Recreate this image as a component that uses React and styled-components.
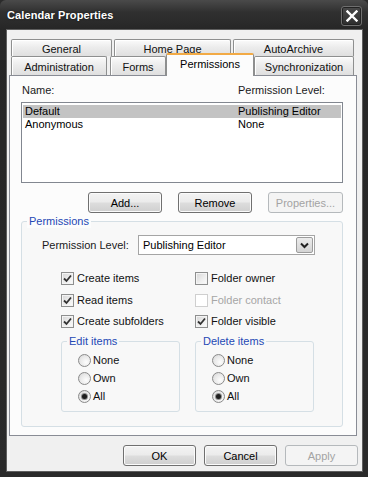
import React from "react";
import styled, { createGlobalStyle } from "styled-components";

const Global = createGlobalStyle`
  html, body { margin: 0; padding: 0; background: #2b2b2b; }
  body { font-family: "Liberation Sans", Arial, sans-serif; font-size: 11px; color: #000; }
  * { box-sizing: border-box; }
`;

const Window = styled.div`
  width: 368px;
  height: 477px;
  display: flex;
  flex-direction: column;
  padding: 0 6px 6px 7px;
  background: linear-gradient(#4a4a4a 0px, #303030 12px, #262626 30px, #2a2a2a 100%);
  border-radius: 6px 6px 0 0;
`;

const TitleBar = styled.div`
  height: 30px;
  flex: none;
  display: flex;
  align-items: center;
  justify-content: space-between;
`;

const Title = styled.div`
  color: #fff;
  font-weight: bold;
  font-size: 11px;
  letter-spacing: 0.1px;
  text-shadow: 0 0 2px rgba(0, 0, 0, 0.6);
`;

const CloseButton = styled.div`
  width: 21px;
  height: 20px;
  margin-top: 2px;
  border: 1px solid #6f6f6f;
  border-radius: 3px;
  background: linear-gradient(#4a4a4a, #2e2e2e);
  box-shadow: inset 0 0 0 1px #222;
  display: flex;
  align-items: center;
  justify-content: center;
`;

const Client = styled.div`
  flex: 1;
  display: flex;
  flex-direction: column;
  background: #f0f0f0;
  box-shadow: 0 0 0 1px #5e5e5e;
  padding: 9px 0 5px 0;
`;

const TabStrip = styled.div`
  display: flex;
  flex-direction: column;
  padding-left: 4px;
`;

const TabRow = styled.div`
  display: flex;
  align-items: flex-end;
  height: ${(p) => p.$h}px;
`;

const Tab = styled.div`
  width: ${(p) => p.$w}px;
  margin-left: ${(p) => p.$ml || 0}px;
  height: ${(p) => p.$h}px;
  border: 1px solid #8e8f8f;
  border-bottom: none;
  border-radius: 2px 2px 0 0;
  background: linear-gradient(#fbfbfb 0%, #ececec 45%, #dfdfdf 100%);
  box-shadow: inset 1px 1px 0 #ffffff;
  display: flex;
  align-items: center;
  justify-content: center;
  padding-top: 1px;
  color: #111;
`;

const ActiveTab = styled.div`
  width: ${(p) => p.$w}px;
  height: 23px;
  margin-bottom: -1px;
  position: relative;
  z-index: 2;
  border: 1px solid #8e8f8f;
  border-top: 2px solid #f2aa45;
  border-bottom: none;
  border-radius: 2px 2px 0 0;
  background: #fcfcfc;
  display: flex;
  justify-content: center;
  padding-top: 3px;
  color: #000;
`;

const Panel = styled.div`
  flex: none;
  margin-left: 2px;
  width: 348px;
  height: 361px;
  border: 1px solid #898c95;
  background: #fcfcfc;
  padding: 8px 0 0 11px;
  display: flex;
  flex-direction: column;
`;

const ListHeader = styled.div`
  display: grid;
  grid-template-columns: 216px 1fr;
  padding-left: 1px;
  line-height: 13px;
  color: #1a1a1a;
`;

const ListBox = styled.div`
  margin-top: 5px;
  width: 322px;
  height: 81px;
  border: 1px solid #828790;
  background: #fff;
  padding: 2px 1px;
`;

const ListRow = styled.div`
  display: grid;
  grid-template-columns: 213px 1fr;
  height: 13px;
  line-height: 13px;
  padding-left: 2px;
  background: ${(p) => (p.$selected ? "#c3c3c3" : "transparent")};
`;

const ButtonRow = styled.div`
  margin-top: 9px;
  width: 322px;
  display: flex;
  justify-content: flex-end;
  gap: 16px;
`;

const Button = styled.div`
  width: ${(p) => p.$w}px;
  height: 21px;
  border: 1px solid ${(p) => (p.$disabled ? "#b5b9bc" : "#707070")};
  border-radius: 3px;
  background: ${(p) =>
    p.$disabled
      ? "#f4f4f4"
      : "linear-gradient(#f3f3f3 0%, #ebebeb 48%, #dddddd 52%, #cfcfcf 100%)"};
  box-shadow: inset 0 0 0 1px ${(p) => (p.$disabled ? "#f4f4f4" : "#fbfbfb")};
  color: ${(p) => (p.$disabled ? "#a3a3a3" : "#000")};
  display: flex;
  align-items: center;
  justify-content: center;
`;

const GroupBox = styled.div`
  position: relative;
  margin-top: ${(p) => p.$mt}px;
  width: ${(p) => p.$w}px;
  border: 1px solid #d5dfe5;
  border-radius: 3px;
  background: ${(p) => p.$bg};
  padding: ${(p) => p.$pad};
`;

const Legend = styled.div`
  position: absolute;
  top: -7px;
  left: 5px;
  padding: 0 2px;
  line-height: 13px;
  color: #2448b5;
  background: ${(p) => p.$bg};
`;

const LevelRow = styled.div`
  display: flex;
  align-items: center;
  height: 20px;
`;

const LevelLabel = styled.div`
  width: 96px;
  color: #1a1a1a;
`;

const Select = styled.div`
  width: 177px;
  height: 20px;
  border: 1px solid #a5a5a5;
  background: #fff;
  display: flex;
  align-items: center;
  padding-left: 4px;
  padding-right: 1px;
`;

const SelectText = styled.div`
  flex: 1;
`;

const SelectArrow = styled.div`
  width: 17px;
  height: 16px;
  border: 1px solid #9c9c9c;
  border-radius: 2px;
  background: linear-gradient(#ececec, #d4d4d4);
  display: flex;
  align-items: center;
  justify-content: center;
`;

const ChecksGrid = styled.div`
  margin-top: 17px;
  padding-left: 19px;
  display: grid;
  grid-template-columns: 134px 134px;
  grid-auto-rows: 13px;
  row-gap: 8.5px;
`;

const CheckItem = styled.div`
  display: flex;
  align-items: center;
  gap: 3px;
  line-height: 13px;
  color: ${(p) => (p.$disabled ? "#a6a6a6" : "#111")};
`;

const Box = styled.div`
  width: 13px;
  height: 13px;
  flex: none;
  border: 1px solid ${(p) => (p.$disabled ? "#cfcfcf" : "#8e8f8f")};
  background: ${(p) =>
    p.$disabled ? "#fff" : "linear-gradient(135deg, #d6d6d6 0%, #efefef 60%, #fdfdfd 100%)"};
  box-shadow: inset 0 0 0 1px ${(p) => (p.$disabled ? "#fff" : "#f4f4f4")};
  display: flex;
  align-items: center;
  justify-content: center;
`;

const SubGroups = styled.div`
  margin-top: 13px;
  padding-left: 19px;
  display: grid;
  grid-template-columns: 134px 134px;
`;

const RadioList = styled.div`
  display: flex;
  flex-direction: column;
  gap: 5px;
`;

const RadioItem = styled.div`
  display: flex;
  align-items: center;
  gap: 2px;
  height: 13px;
  line-height: 13px;
  color: #111;
`;

const Circle = styled.div`
  width: 13px;
  height: 13px;
  border-radius: 50%;
  border: 1px solid #8a8a8a;
  background: radial-gradient(circle at 65% 65%, #fdfdfd 0%, #e9e9e9 55%, #d2d2d2 100%);
  display: flex;
  align-items: center;
  justify-content: center;
`;

const Dot = styled.div`
  width: 5px;
  height: 5px;
  border-radius: 50%;
  background: #1e1e1e;
  box-shadow: 0 0 0 1px #8d8d8d;
`;

const BottomBar = styled.div`
  margin-top: 9px;
  display: flex;
  justify-content: flex-end;
  gap: 8px;
  padding-right: 4px;
`;

const Check = () => (
  <svg width="9" height="9" viewBox="0 0 9 9">
    <polyline points="1,4.5 3.5,7 8,1.5" fill="none" stroke="#333" strokeWidth="1.8" />
  </svg>
);

const CheckBox = ({ checked, disabled, label }) => (
  <CheckItem $disabled={disabled}>
    <Box $disabled={disabled}>{checked && <Check />}</Box>
    {label}
  </CheckItem>
);

const Radio = ({ checked, label }) => (
  <RadioItem>
    <Circle>{checked && <Dot />}</Circle>
    {label}
  </RadioItem>
);

const RadioGroup = ({ title }) => (
  <GroupBox $w={119} $mt={0} $bg="#f8f8f8" $pad="12px 0 8px 16px">
    <Legend $bg="#f8f8f8">{title}</Legend>
    <RadioList>
      <Radio label="None" />
      <Radio label="Own" />
      <Radio label="All" checked />
    </RadioList>
  </GroupBox>
);

export default function App() {
  return (
    <>
      <Global />
      <Window>
        <TitleBar>
          <Title>Calendar Properties</Title>
          <CloseButton>
            <svg width="12" height="12" viewBox="0 0 12 12">
              <path d="M1.5 1.5 L10.5 10.5 M10.5 1.5 L1.5 10.5" stroke="#fff" strokeWidth="2.4" strokeLinecap="square" />
            </svg>
          </CloseButton>
        </TitleBar>
        <Client>
          <TabStrip>
            <TabRow $h={17}>
              <Tab $w={101} $h={17}>General</Tab>
              <Tab $w={117} $h={17} $ml={2}>Home Page</Tab>
              <Tab $w={121} $h={17} $ml={2}>AutoArchive</Tab>
            </TabRow>
            <TabRow $h={19}>
              <Tab $w={96} $h={19}>Administration</Tab>
              <Tab $w={56} $h={19} $ml={3}>Forms</Tab>
              <ActiveTab $w={88}>Permissions</ActiveTab>
              <Tab $w={100} $h={19}>Synchronization</Tab>
            </TabRow>
          </TabStrip>
          <Panel>
            <ListHeader>
              <span>Name:</span>
              <span>Permission Level:</span>
            </ListHeader>
            <ListBox>
              <ListRow $selected>
                <span>Default</span>
                <span>Publishing Editor</span>
              </ListRow>
              <ListRow>
                <span>Anonymous</span>
                <span>None</span>
              </ListRow>
            </ListBox>
            <ButtonRow>
              <Button $w={74}>Add...</Button>
              <Button $w={74}>Remove</Button>
              <Button $w={75} $disabled>Properties...</Button>
            </ButtonRow>
            <GroupBox $w={322} $mt={8} $bg="#f8f8f8" $pad="13px 0 14px 20px">
              <Legend $bg="#fcfcfc">Permissions</Legend>
              <LevelRow>
                <LevelLabel>Permission Level:</LevelLabel>
                <Select>
                  <SelectText>Publishing Editor</SelectText>
                  <SelectArrow>
                    <svg width="9" height="7" viewBox="0 0 9 7">
                      <polyline points="1,1.5 4.5,5 8,1.5" fill="none" stroke="#222" strokeWidth="2" />
                    </svg>
                  </SelectArrow>
                </Select>
              </LevelRow>
              <ChecksGrid>
                <CheckBox checked label="Create items" />
                <CheckBox label="Folder owner" />
                <CheckBox checked label="Read items" />
                <CheckBox disabled label="Folder contact" />
                <CheckBox checked label="Create subfolders" />
                <CheckBox checked label="Folder visible" />
              </ChecksGrid>
              <SubGroups>
                <RadioGroup title="Edit items" />
                <RadioGroup title="Delete items" />
              </SubGroups>
            </GroupBox>
          </Panel>
          <BottomBar>
            <Button $w={73}>OK</Button>
            <Button $w={73}>Cancel</Button>
            <Button $w={73} $disabled>Apply</Button>
          </BottomBar>
        </Client>
      </Window>
    </>
  );
}
